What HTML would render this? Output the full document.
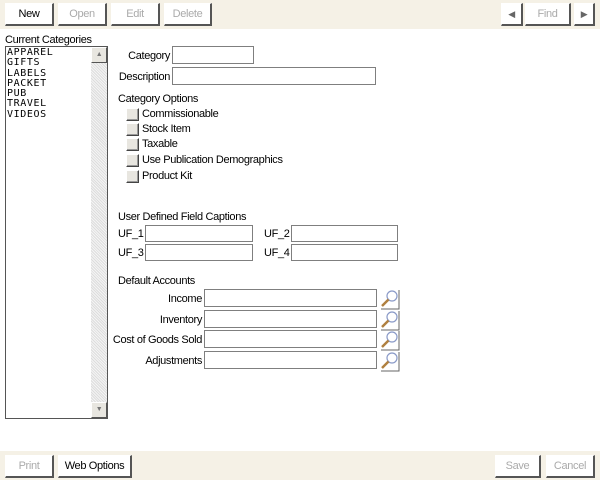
<!DOCTYPE html>
<html><head><style>
*{margin:0;padding:0;box-sizing:border-box}
body{width:600px;height:480px;background:#fff;font-family:"Liberation Sans",sans-serif;font-size:11px;letter-spacing:-0.35px;color:#000;position:relative;overflow:hidden}
.a{position:absolute}
.bar{position:absolute;left:0;width:600px;background:#f5f1e6}
.btn{position:absolute;height:23px;background:#fff;border:1px solid #fff;border-right:2px solid #555;border-bottom:2px solid #555;text-align:center;line-height:20px;font-size:11px}
.dis{color:#aaa}
.inp{position:absolute;height:18px;border:1px solid #7f7f7f;background:#fff}
.cb{position:absolute;width:13px;height:13px;border:1px solid #fff;border-right:1px solid #444;border-bottom:1px solid #444;background:#e8e6e0;box-shadow:inset -1px -1px #999}
.lbl{position:absolute;white-space:nowrap}
.r{text-align:right}
</style></head><body>
<div class="bar" style="top:0;height:29px"></div>
<div class="bar" style="top:451px;height:29px"></div>
<div class="btn" style="left:5px;top:3px;width:49px">New</div>
<div class="btn dis" style="left:58px;top:3px;width:49px">Open</div>
<div class="btn dis" style="left:111px;top:3px;width:49px">Edit</div>
<div class="btn dis" style="left:164px;top:3px;width:48px">Delete</div>
<div class="btn" style="left:501px;top:3px;width:22px;color:#666;font-size:9px">◀</div>
<div class="btn dis" style="left:525px;top:3px;width:46px">Find</div>
<div class="btn" style="left:574px;top:3px;width:21px;color:#666;font-size:9px">▶</div>

<div class="lbl" style="left:5px;top:34px">Current Categories</div>
<div class="a" style="left:5px;top:46px;width:103px;height:373px;border:1px solid #555;background:#fff">
<div style="font-family:'DejaVu Sans Mono','Liberation Mono',monospace;font-size:10px;line-height:10.3px;padding:1px 0 0 1px;letter-spacing:0.6px">APPAREL<br>GIFTS<br>LABELS<br>PACKET<br>PUB<br>TRAVEL<br>VIDEOS</div>
<div class="a" style="left:85px;top:0;width:16px;height:371px;background:repeating-linear-gradient(45deg,#ddd 0 1px,#f4f4f4 1px 2px)"></div>
<div class="a" style="left:85px;top:0;width:16px;height:16px;background:#e8e6e0;border:1px solid #fff;border-right-color:#555;border-bottom-color:#555;font-size:7px;color:#777;text-align:center;line-height:13px">▲</div>
<div class="a" style="left:85px;top:355px;width:16px;height:16px;background:#e8e6e0;border:1px solid #fff;border-right-color:#555;border-bottom-color:#555;font-size:7px;color:#777;text-align:center;line-height:13px">▼</div>
</div>

<div class="lbl r" style="left:100px;width:70px;top:50px">Category</div>
<div class="inp" style="left:172px;top:46px;width:82px"></div>
<div class="lbl r" style="left:100px;width:70px;top:71px">Description</div>
<div class="inp" style="left:172px;top:67px;width:204px"></div>
<div class="lbl" style="left:118px;top:93px">Category Options</div>
<div class="cb" style="left:126px;top:108px"></div><div class="lbl" style="left:142px;top:108px">Commissionable</div>
<div class="cb" style="left:126px;top:123px"></div><div class="lbl" style="left:142px;top:123px">Stock Item</div>
<div class="cb" style="left:126px;top:138px"></div><div class="lbl" style="left:142px;top:138px">Taxable</div>
<div class="cb" style="left:126px;top:154px"></div><div class="lbl" style="left:142px;top:154px">Use Publication Demographics</div>
<div class="cb" style="left:126px;top:170px"></div><div class="lbl" style="left:142px;top:170px">Product Kit</div>

<div class="lbl" style="left:118px;top:211px">User Defined Field Captions</div>
<div class="lbl" style="left:118px;top:228px">UF_1</div><div class="inp" style="left:145px;top:225px;width:108px;height:17px"></div>
<div class="lbl" style="left:264px;top:228px">UF_2</div><div class="inp" style="left:291px;top:225px;width:107px;height:17px"></div>
<div class="lbl" style="left:118px;top:247px">UF_3</div><div class="inp" style="left:145px;top:244px;width:108px;height:17px"></div>
<div class="lbl" style="left:264px;top:247px">UF_4</div><div class="inp" style="left:291px;top:244px;width:107px;height:17px"></div>

<div class="lbl" style="left:118px;top:275px">Default Accounts</div>
<div class="lbl r" style="left:100px;width:102px;top:293px">Income</div><div class="inp" style="left:204px;top:289px;width:173px"></div>
<div class="lbl r" style="left:100px;width:102px;top:314px">Inventory</div><div class="inp" style="left:204px;top:310px;width:173px"></div>
<div class="lbl r" style="left:100px;width:102px;top:334px">Cost of Goods Sold</div><div class="inp" style="left:204px;top:330px;width:173px"></div>
<div class="lbl r" style="left:100px;width:102px;top:355px">Adjustments</div><div class="inp" style="left:204px;top:351px;width:173px"></div>
<svg class="a" style="left:380px;top:289px" width="20" height="84" viewBox="0 0 20 84">
<defs><g id="m"><circle cx="12" cy="7" r="5" fill="#fff" stroke="#8a9ac8" stroke-width="1.2"/><line x1="8.5" y1="10.5" x2="2" y2="17" stroke="#b08040" stroke-width="2.5"/><path d="M19 1v19H1" fill="none" stroke="#666"/></g></defs>
<use href="#m" y="0"/><use href="#m" y="21"/><use href="#m" y="41"/><use href="#m" y="62"/>
</svg>

<div class="btn dis" style="left:5px;top:455px;width:49px">Print</div>
<div class="btn" style="left:58px;top:455px;width:74px">Web Options</div>
<div class="btn dis" style="left:495px;top:455px;width:46px">Save</div>
<div class="btn dis" style="left:546px;top:455px;width:49px">Cancel</div>
</body></html>
